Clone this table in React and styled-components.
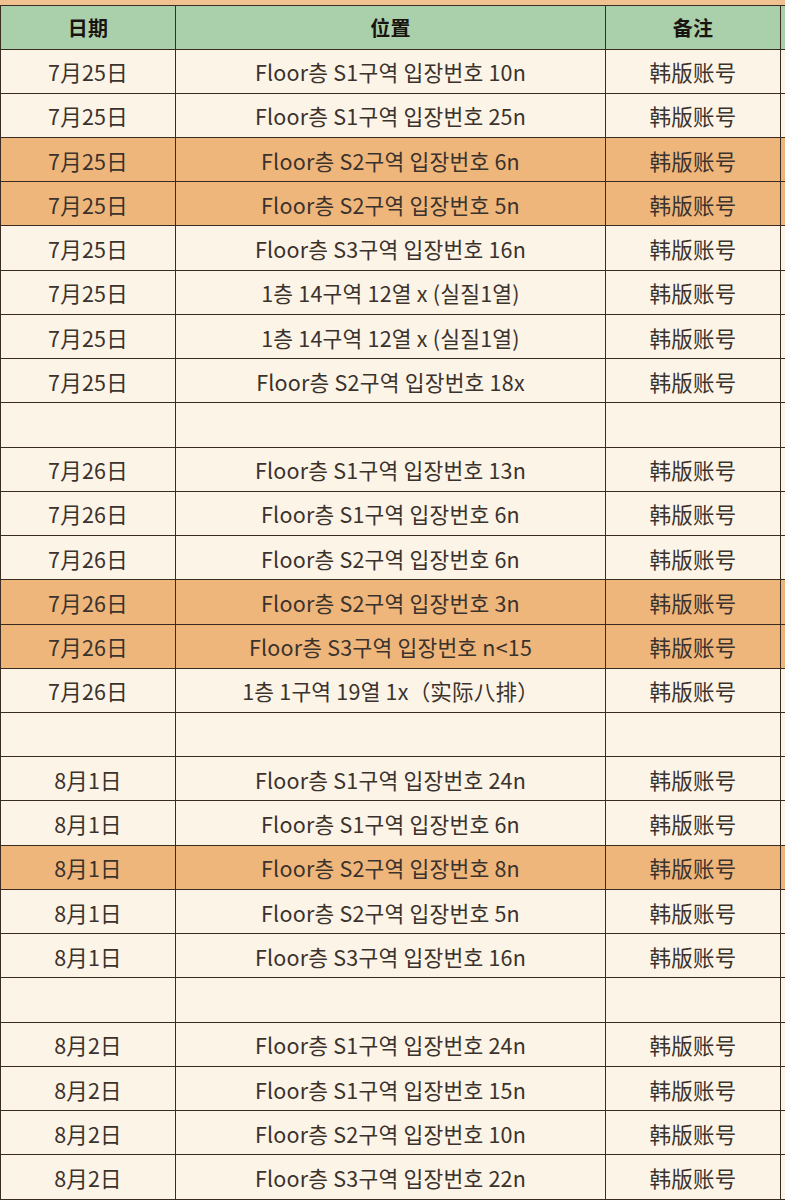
import styled, { createGlobalStyle } from 'styled-components';

const GlobalStyle = createGlobalStyle`
  html, body {
    margin: 0;
    padding: 0;
    background: #fdf4e8;
  }
  body {
    font-family: 'Noto Sans CJK SC', 'Noto Sans', sans-serif;
  }
`;

const Sheet = styled.div`
  width: 785px;
  height: 1200px;
  overflow: hidden;
  background: #fdf4e8;
`;

const TopStrip = styled.div`
  height: 5px;
  background: #f1c291;
  border-bottom: 1.5px solid #3b2c22;
`;

const Row = styled.div`
  display: grid;
  grid-template-columns: 175px 430px 175px 1fr;
  height: ${(p) => (p.$header ? '43.5px' : '44.24px')};
  box-sizing: border-box;
  border-bottom: 1.5px solid #3b2c22;
  border-left: 1.5px solid #3b2c22;
  background: ${(p) => (p.$header ? '#a9d0ab' : p.$hot ? '#efb67c' : '#fdf4e8')};
`;

const Cell = styled.div`
  display: flex;
  align-items: center;
  justify-content: center;
  border-right: 1.5px solid #3b2c22;
  font-size: ${(p) => (p.$header ? '20px' : '21.5px')};
  font-weight: ${(p) => (p.$header ? 700 : 400)};
  color: ${(p) => (p.$header ? '#1a1410' : '#3a322c')};
  white-space: nowrap;
  letter-spacing: 0.2px;
  padding-top: 1px;
  &:last-child {
    border-right: none;
  }
`;

const rows = [
  ['7月25日', 'Floor층 S1구역 입장번호 10n'],
  ['7月25日', 'Floor층 S1구역 입장번호 25n'],
  ['7月25日', 'Floor층 S2구역 입장번호 6n', true],
  ['7月25日', 'Floor층 S2구역 입장번호 5n', true],
  ['7月25日', 'Floor층 S3구역 입장번호 16n'],
  ['7月25日', '1층 14구역 12열 x (실질1열)'],
  ['7月25日', '1층 14구역 12열 x (실질1열)'],
  ['7月25日', 'Floor층 S2구역 입장번호 18x'],
  null,
  ['7月26日', 'Floor층 S1구역 입장번호 13n'],
  ['7月26日', 'Floor층 S1구역 입장번호 6n'],
  ['7月26日', 'Floor층 S2구역 입장번호 6n'],
  ['7月26日', 'Floor층 S2구역 입장번호 3n', true],
  ['7月26日', 'Floor층 S3구역 입장번호 n<15', true],
  ['7月26日', '1층 1구역 19열 1x（实际八排）'],
  null,
  ['8月1日', 'Floor층 S1구역 입장번호 24n'],
  ['8月1日', 'Floor층 S1구역 입장번호 6n'],
  ['8月1日', 'Floor층 S2구역 입장번호 8n', true],
  ['8月1日', 'Floor층 S2구역 입장번호 5n'],
  ['8月1日', 'Floor층 S3구역 입장번호 16n'],
  null,
  ['8月2日', 'Floor층 S1구역 입장번호 24n'],
  ['8月2日', 'Floor층 S1구역 입장번호 15n'],
  ['8月2日', 'Floor층 S2구역 입장번호 10n'],
  ['8月2日', 'Floor층 S3구역 입장번호 22n'],
];

export default function App() {
  return (
    <Sheet>
      <GlobalStyle />
      <TopStrip />
      <Row $header>
        <Cell $header>日期</Cell>
        <Cell $header>位置</Cell>
        <Cell $header>备注</Cell>
        <Cell />
      </Row>
      {rows.map((r, i) =>
        r ? (
          <Row key={i} $hot={r[2]}>
            <Cell>{r[0]}</Cell>
            <Cell>{r[1]}</Cell>
            <Cell>韩版账号</Cell>
            <Cell />
          </Row>
        ) : (
          <Row key={i}>
            <Cell />
            <Cell />
            <Cell />
            <Cell />
          </Row>
        )
      )}
    </Sheet>
  );
}
